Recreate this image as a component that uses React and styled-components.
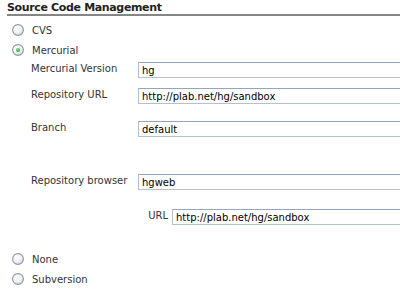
import React from "react";
import styled, { createGlobalStyle } from "styled-components";

const Global = createGlobalStyle`
  html, body { margin: 0; padding: 0; background: #fff; overflow: hidden; }
  body { font-family: "DejaVu Sans", Verdana, sans-serif; font-size: 10px; color: #333; }
`;

const Page = styled.div`
  width: 400px;
  height: 290px;
  padding-left: 7px;
  box-sizing: border-box;
  overflow: hidden;
`;

const Header = styled.div`
  font-weight: bold;
  font-size: 11px;
  letter-spacing: -0.35px;
  color: #222;
  padding-top: 2px;
  height: 12px;
  line-height: 12px;
  border-bottom: 2px solid #858585;
  margin-bottom: 4px;
`;

const RadioRow = styled.label`
  display: flex;
  align-items: center;
  height: 20px;
  gap: 8px;
  padding-left: 5px;
  color: #333;
  margin-top: ${(p) => p.$mt || 0}px;
`;

const RadioIcon = ({ checked }) => (
  <svg width="12" height="12" viewBox="0 0 12 12">
    <defs>
      <radialGradient id="rg" cx="0.35" cy="0.3" r="0.8">
        <stop offset="0" stopColor="#ffffff" />
        <stop offset="0.6" stopColor="#eef0f2" />
        <stop offset="1" stopColor="#c9ced6" />
      </radialGradient>
      <radialGradient id="gd" cx="0.4" cy="0.35" r="0.7">
        <stop offset="0" stopColor="#8fe38f" />
        <stop offset="1" stopColor="#1f9a2a" />
      </radialGradient>
    </defs>
    <circle cx="6" cy="6" r="5.4" fill="url(#rg)" stroke="#8b98a6" strokeWidth="1.1" />
    {checked && <circle cx="6" cy="6" r="2" fill="url(#gd)" />}
  </svg>
);

const SubForm = styled.div`
  margin-left: 24px;
  margin-top: 2px;
  display: grid;
  grid-template-columns: 107px 1fr;
  align-items: start;
`;

const Label = styled.div`
  color: #333;
  line-height: 12px;
  padding-top: 1px;
  white-space: nowrap;
`;

const Field = styled.div`
  margin-bottom: ${(p) => p.$mb || 0}px;
`;

const Input = styled.input`
  display: block;
  width: 320px;
  height: 16px;
  box-sizing: border-box;
  border: 1px solid #b3c0d2;
  border-top-color: #92a6c0;
  padding: 0 3px;
  font-family: "DejaVu Sans", Verdana, sans-serif;
  font-size: 10px;
  color: #000;
  background: #fff;
  outline: none;
`;

const Nested = styled.div`
  display: flex;
  align-items: flex-start;
  padding-left: 10px;
  gap: 4px;
`;

const NestedLabel = styled.div`
  color: #333;
  line-height: 12px;
  padding-top: 1px;
  width: 20px;
  text-align: right;
`;

export default function App() {
  return (
    <>
      <Global />
      <Page>
        <Header>Source Code Management</Header>
        <RadioRow>
          <RadioIcon />
          CVS
        </RadioRow>
        <RadioRow>
          <RadioIcon checked />
          Mercurial
        </RadioRow>
        <SubForm>
          <Label>Mercurial Version</Label>
          <Field $mb={10}>
            <Input defaultValue="hg" readOnly />
          </Field>
          <Label>Repository URL</Label>
          <Field $mb={17}>
            <Input defaultValue="http://plab.net/hg/sandbox" readOnly />
          </Field>
          <Label>Branch</Label>
          <Field $mb={37}>
            <Input defaultValue="default" readOnly />
          </Field>
          <Label>Repository browser</Label>
          <Field $mb={19}>
            <Input defaultValue="hgweb" readOnly />
          </Field>
          <div />
          <Field>
            <Nested>
              <NestedLabel>URL</NestedLabel>
              <Input defaultValue="http://plab.net/hg/sandbox" readOnly />
            </Nested>
          </Field>
        </SubForm>
        <RadioRow $mt={24}>
          <RadioIcon />
          None
        </RadioRow>
        <RadioRow>
          <RadioIcon />
          Subversion
        </RadioRow>
      </Page>
    </>
  );
}
